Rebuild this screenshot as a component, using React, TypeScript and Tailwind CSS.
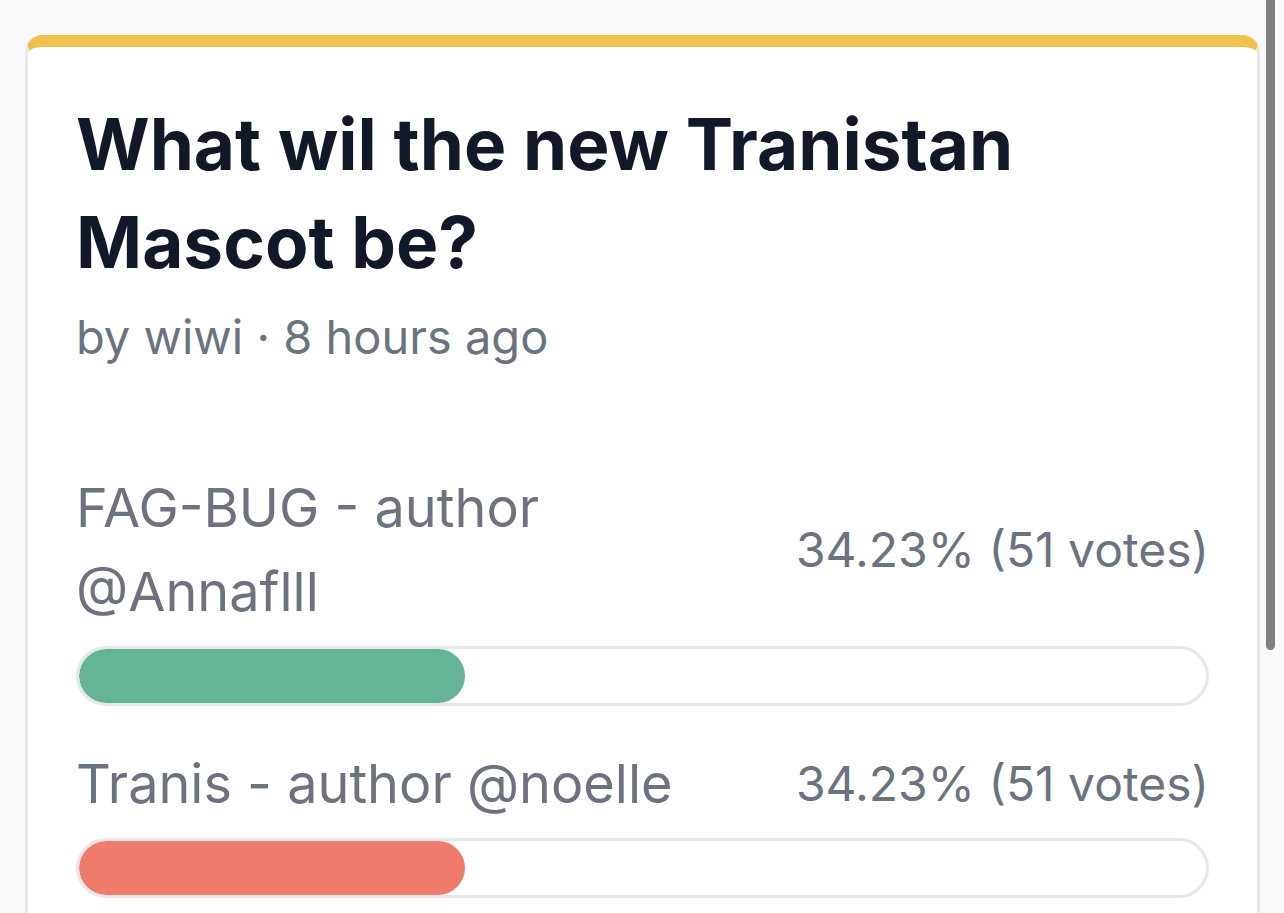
const options = [
  { label: "FAG-BUG - author @Annaflll", percent: 34.23, votes: 51, color: "bg-[#63b594]" },
  { label: "Tranis - author @noelle", percent: 34.23, votes: 51, color: "bg-[#ef7b6a]" },
];

function PollOption({ label, percent, votes, color }: (typeof options)[number]) {
  return (
    <div className="flex flex-col">
      <div className="flex items-center justify-between gap-6">
        <span className="min-w-0 flex-1 text-[54px] leading-[84px] text-[#6b7280]">{label}</span>
        <span className="shrink-0 text-[48px] leading-[84px] text-[#6b7280]">
          {percent.toFixed(2)}% ({votes} votes)
        </span>
      </div>
      <div className="mt-[12px] h-[60px] overflow-hidden rounded-full border-[3px] border-[#e5e7eb] bg-white">
        <div className={`h-full rounded-full ${color}`} style={{ width: `${percent}%` }} />
      </div>
    </div>
  );
}

export default function App() {
  return (
    <div
      className="relative h-screen overflow-hidden bg-[#f9f9f9] pl-[25px] pr-[24px] pt-[35px]"
      style={{ fontFamily: "Inter, 'Noto Sans', sans-serif" }}
    >
      <div className="rounded-t-[18px] border-x-[3px] border-t-[12px] border-[#e5e7eb] border-t-[#f0c14e] bg-white px-[48px] pt-[48px] pb-[48px]">
        <h1 className="text-[71px] font-bold leading-[98px] text-[#111827]">
          What wil the new Tranistan Mascot be?
        </h1>
        <p className="mt-[10px] text-[47px] leading-[72px] text-[#6b7280]">by wiwi · 8 hours ago</p>

        <div className="mt-[93px] flex flex-col gap-[36px]">
          {options.map((o) => (
            <PollOption key={o.label} {...o} />
          ))}
        </div>
      </div>

      {/* scrollbar overlay */}
      <div className="pointer-events-none fixed right-0 top-0 h-full w-[24px]">
        <div className="absolute left-[6px] top-[-20px] h-[670px] w-[9px] rounded-full bg-[#808080]" />
      </div>
    </div>
  );
}
